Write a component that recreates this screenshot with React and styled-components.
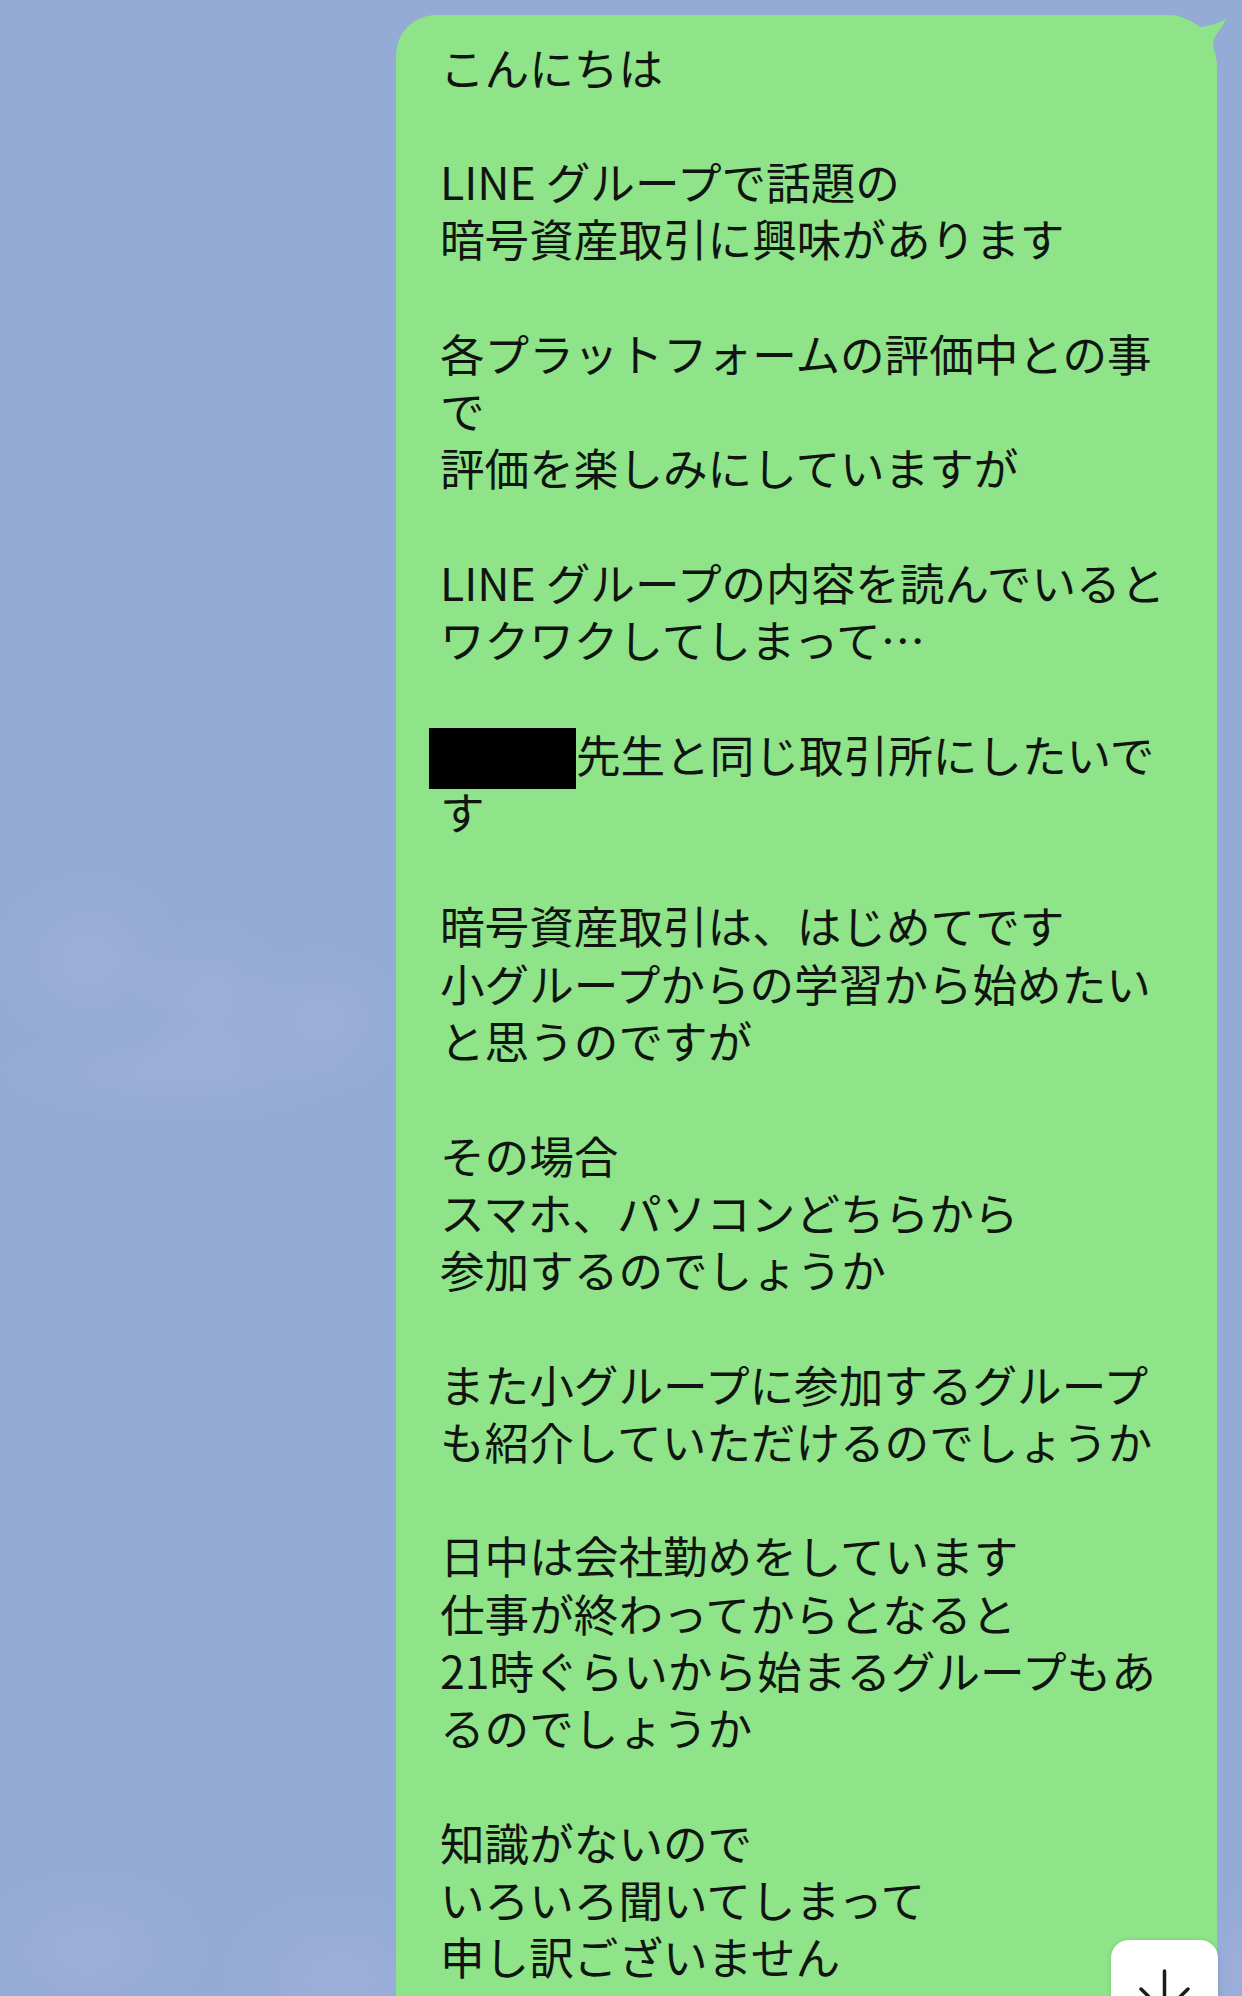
import React from 'react';
import styled, { createGlobalStyle } from 'styled-components';

const GlobalStyle = createGlobalStyle`
  html, body {
    margin: 0;
    padding: 0;
    width: 1242px;
    height: 1996px;
    overflow: hidden;
    background: #93abd5;
  }
  #root {
    width: 1242px;
    height: 1996px;
  }
`;

const cloud = 'rgba(163, 178, 220, 0.5)';

const Screen = styled.div`
  position: relative;
  width: 1242px;
  height: 1996px;
  overflow: hidden;
  box-sizing: border-box;
  padding: 15px 25px 0 0;
  display: flex;
  justify-content: flex-end;
  align-items: flex-start;
  background-color: #93abd5;
  background-image:
    radial-gradient(ellipse 130px 120px at 90px 960px, ${cloud}, transparent 75%),
    radial-gradient(ellipse 110px 110px at 210px 1000px, ${cloud}, transparent 75%),
    radial-gradient(ellipse 120px 100px at 320px 1020px, ${cloud}, transparent 75%),
    radial-gradient(ellipse 240px 70px at 180px 1070px, ${cloud}, transparent 75%),
    radial-gradient(ellipse 160px 110px at 90px 1950px, ${cloud}, transparent 75%),
    radial-gradient(ellipse 160px 120px at 340px 1980px, ${cloud}, transparent 75%),
    radial-gradient(ellipse 60px 110px at 1242px 1970px, ${cloud}, transparent 75%);
`;

const Bubble = styled.div`
  position: relative;
  width: 821px;
  box-sizing: border-box;
  padding: 22.5px 0 80px 44px;
  background: #8fe388;
  border-radius: 40px 55px 40px 40px;
`;

const Tail = styled.svg`
  position: absolute;
  top: -5px;
  right: -13px;
  width: 60px;
  height: 60px;
  overflow: visible;
`;

const Message = styled.div`
  font-family: "Noto Sans CJK JP", "Noto Sans", sans-serif;
  font-size: 44.6px;
  line-height: 57.27px;
  font-weight: 400;
  color: #111511;
`;

const Line = styled.div`
  white-space: pre;
  min-height: 57.27px;
`;

const Redacted = styled.span`
  display: inline-block;
  vertical-align: top;
  width: 147px;
  height: 61px;
  margin: 3px 0 -7px -11px;
  background: #000;
`;

const ScrollButton = styled.button`
  position: absolute;
  right: 24px;
  bottom: -44px;
  width: 107px;
  height: 100px;
  padding: 0;
  border: none;
  border-radius: 18px;
  background: #ffffff;
  box-shadow: 0 0 5px rgba(0, 0, 0, 0.12);
  display: flex;
  align-items: flex-start;
  justify-content: center;
`;

const ArrowIcon = styled.svg`
  width: 107px;
  height: 100px;
  display: block;
`;

const lines = [
  'こんにちは',
  '',
  'LINE グループで話題の',
  '暗号資産取引に興味があります',
  '',
  '各プラットフォームの評価中との事',
  'で',
  '評価を楽しみにしていますが',
  '',
  'LINE グループの内容を読んでいると',
  'ワクワクしてしまって…',
  '',
  { redacted: true, text: '先生と同じ取引所にしたいで' },
  'す',
  '',
  '暗号資産取引は、はじめてです',
  '小グループからの学習から始めたい',
  'と思うのですが',
  '',
  'その場合',
  'スマホ、パソコンどちらから',
  '参加するのでしょうか',
  '',
  'また小グループに参加するグループ',
  'も紹介していただけるのでしょうか',
  '',
  '日中は会社勤めをしています',
  '仕事が終わってからとなると',
  '21時ぐらいから始まるグループもあ',
  'るのでしょうか',
  '',
  '知識がないので',
  'いろいろ聞いてしまって',
  '申し訳ございません',
];

export default function App() {
  return (
    <>
      <GlobalStyle />
      <Screen>
        <Bubble>
          <Tail viewBox="0 0 60 60" aria-hidden="true">
            <path
              d="M0,5 C10,5 22,11 30,17 C40,16 50,13 56,9 C53,17 45,24 43,32 C43,40 47,46 47,56 V60 H0 Z"
              fill="#8fe388"
            />
          </Tail>
          <Message>
            {lines.map((l, i) =>
              typeof l === 'string' ? (
                <Line key={i}>{l}</Line>
              ) : (
                <Line key={i}>
                  <Redacted />
                  {l.text}
                </Line>
              )
            )}
          </Message>
        </Bubble>
        <ScrollButton aria-label="scroll to bottom">
          <ArrowIcon viewBox="0 0 107 100" aria-hidden="true">
            <g fill="none" stroke="#1c1c1c" strokeWidth="3.5" strokeLinecap="round" strokeLinejoin="round">
              <line x1="53.5" y1="31" x2="53.5" y2="90" />
              <polyline points="30,49 53.5,72 77,49" />
            </g>
          </ArrowIcon>
        </ScrollButton>
      </Screen>
    </>
  );
}
